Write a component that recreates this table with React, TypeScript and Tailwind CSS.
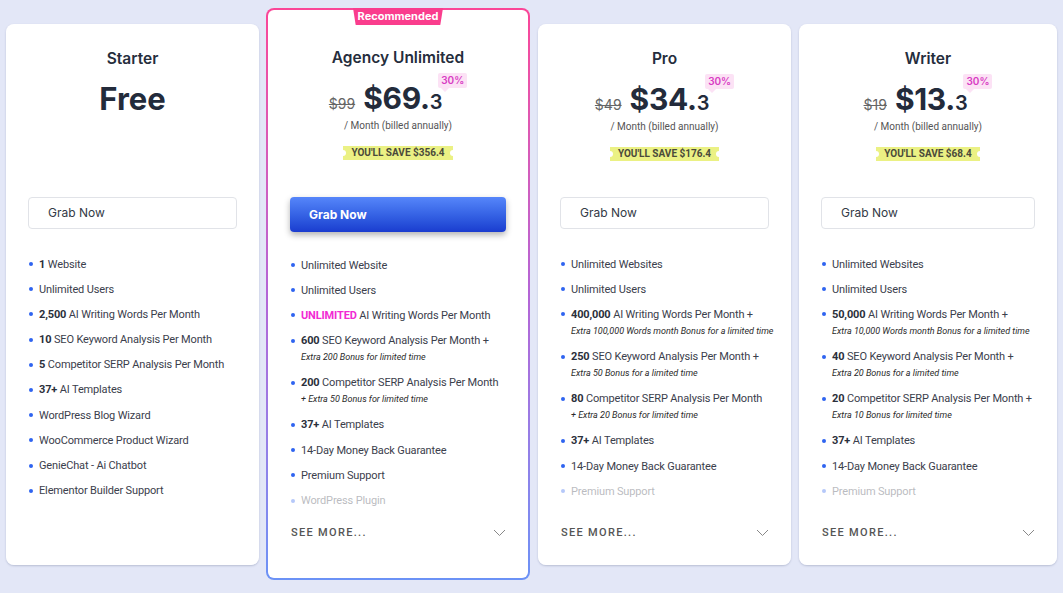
import React from 'react';

type Feature = {
  bold?: string;
  pink?: string;
  text: string;
  sub?: string;
  faded?: boolean;
};

type Plan = {
  name: string;
  width: string;
  gap: string;
  featured?: boolean;
  free?: boolean;
  old?: string;
  price?: string;
  cents?: string;
  save?: string;
  features: Feature[];
  seeMore?: boolean;
};

const plans: Plan[] = [
  {
    name: 'Starter',
    width: 'w-[253px]',
    gap: 'ml-[6px]',
    free: true,
    features: [
      { bold: '1', text: 'Website' },
      { text: 'Unlimited Users' },
      { bold: '2,500', text: 'AI Writing Words Per Month' },
      { bold: '10', text: 'SEO Keyword Analysis Per Month' },
      { bold: '5', text: 'Competitor SERP Analysis Per Month' },
      { bold: '37+', text: 'AI Templates' },
      { text: 'WordPress Blog Wizard' },
      { text: 'WooCommerce Product Wizard' },
      { text: 'GenieChat - Ai Chatbot' },
      { text: 'Elementor Builder Support' },
    ],
  },
  {
    name: 'Agency Unlimited',
    width: 'w-[264px]',
    gap: 'ml-[7px]',
    featured: true,
    old: '$99',
    price: '$69.',
    cents: '3',
    save: "YOU'LL SAVE $356.4",
    seeMore: true,
    features: [
      { text: 'Unlimited Website' },
      { text: 'Unlimited Users' },
      { pink: 'UNLIMITED', text: 'AI Writing Words Per Month' },
      { bold: '600', text: 'SEO Keyword Analysis Per Month +', sub: 'Extra 200 Bonus for limited time' },
      { bold: '200', text: 'Competitor SERP Analysis Per Month', sub: '+ Extra 50 Bonus for limited time' },
      { bold: '37+', text: 'AI Templates' },
      { text: '14-Day Money Back Guarantee' },
      { text: 'Premium Support' },
      { text: 'WordPress Plugin', faded: true },
    ],
  },
  {
    name: 'Pro',
    width: 'w-[253px]',
    gap: 'ml-[8px]',
    old: '$49',
    price: '$34.',
    cents: '3',
    save: "YOU'LL SAVE $176.4",
    seeMore: true,
    features: [
      { text: 'Unlimited Websites' },
      { text: 'Unlimited Users' },
      { bold: '400,000', text: 'AI Writing Words Per Month +', sub: 'Extra 100,000 Words month Bonus for a limited time' },
      { bold: '250', text: 'SEO Keyword Analysis Per Month +', sub: 'Extra 50 Bonus for a limited time' },
      { bold: '80', text: 'Competitor SERP Analysis Per Month', sub: '+ Extra 20 Bonus for limited time' },
      { bold: '37+', text: 'AI Templates' },
      { text: '14-Day Money Back Guarantee' },
      { text: 'Premium Support', faded: true },
    ],
  },
  {
    name: 'Writer',
    width: 'w-[258px]',
    gap: 'ml-[8px]',
    old: '$19',
    price: '$13.',
    cents: '3',
    save: "YOU'LL SAVE $68.4",
    seeMore: true,
    features: [
      { text: 'Unlimited Websites' },
      { text: 'Unlimited Users' },
      { bold: '50,000', text: 'AI Writing Words Per Month +', sub: 'Extra 10,000 Words month Bonus for a limited time' },
      { bold: '40', text: 'SEO Keyword Analysis Per Month +', sub: 'Extra 20 Bonus for a limited time' },
      { bold: '20', text: 'Competitor SERP Analysis Per Month +', sub: 'Extra 10 Bonus for limited time' },
      { bold: '37+', text: 'AI Templates' },
      { text: '14-Day Money Back Guarantee' },
      { text: 'Premium Support', faded: true },
    ],
  },
];

const SaveBadge: React.FC<{ label: string }> = ({ label }) => (
  <div className="relative h-[14px] bg-[#ebf184] px-[8px] flex items-center text-[10px] font-bold text-[#4a4a3a] leading-none">
    {label}
    <span className="absolute left-[-3px] top-[4px] w-[6px] h-[6px] rounded-full bg-white" />
    <span className="absolute right-[-3px] top-[4px] w-[6px] h-[6px] rounded-full bg-white" />
  </div>
);

const PlanCard: React.FC<{ plan: Plan }> = ({ plan }) => {
  const f = plan.featured;
  const body = (
    <div
      className={`flex flex-col h-full bg-white px-[22px] ${
        f ? 'rounded-[6px] pb-[37px]' : 'rounded-lg pb-[24px]'
      }`}
    >
      <div className={`flex flex-col items-center shrink-0 ${f ? 'h-[187px] pt-[37px]' : 'h-[173px] pt-[24px]'}`}>
        <h2 className="text-[15.5px] leading-[22px] font-semibold text-[#252d3c] font-['Inter',sans-serif]">
          {plan.name}
        </h2>
        {plan.free ? (
          <div className="mt-[11px] text-[31px] leading-[36px] font-bold text-[#232b3b] font-['Inter',sans-serif]">
            Free
          </div>
        ) : (
          <>
            <div className="mt-[11px] flex items-baseline h-[36px] font-['Inter',sans-serif]">
              <span className="text-[14px] text-[#666] line-through decoration-[1px] mr-[8px]">{plan.old}</span>
              <span className="text-[30px] leading-[36px] font-bold text-[#232b3b] tracking-[-0.3px]">
                {plan.price}
                <span className="text-[20px] font-semibold">{plan.cents}</span>
              </span>
              <span className="relative self-start -mt-[7px] -ml-[4px] h-[15px] px-[3px] rounded-[2px] bg-[#fce2f5] text-[10px] leading-[15px] font-semibold text-[#d83cc3]">
                30%
                <span className="absolute left-[3px] bottom-[-4px] w-0 h-0 border-l-[4px] border-l-transparent border-r-[4px] border-r-transparent border-t-[4px] border-t-[#fce2f5]" />
              </span>
            </div>
            <div className="mt-[3px] text-[10px] leading-[14px] text-[#555] font-['Roboto',sans-serif]">
              / Month (billed annually)
            </div>
            <div className="mt-[13px] font-['Roboto',sans-serif]">
              <SaveBadge label={plan.save || ''} />
            </div>
          </>
        )}
      </div>

      {f ? (
        <button className="shrink-0 h-[35px] w-full rounded-[4px] bg-gradient-to-b from-[#5686fa] to-[#1b3ccf] text-left pl-[19px] text-[12px] font-bold text-white shadow-[0_3px_6px_rgba(0,0,0,0.3)] font-['Inter',sans-serif]">
          Grab Now
        </button>
      ) : (
        <button className="shrink-0 h-[32px] w-full rounded-[4px] border border-[#e1e3e8] bg-white text-left pl-[19px] text-[12px] text-[#333a46] font-['Inter',sans-serif]">
          Grab Now
        </button>
      )}

      <ul className={`shrink-0 flex flex-col gap-[8.2px] font-['Roboto',sans-serif] ${f ? 'mt-[24.5px]' : 'mt-[27px]'}`}>
        {plan.features.map((it, i) => (
          <li key={i} className={`flex ${it.faded ? 'opacity-35' : ''}`}>
            <span className="w-[4px] h-[4px] rounded-full bg-[#2f64f0] mt-[6.5px] ml-[1px] mr-[6px] shrink-0" />
            <div className="whitespace-nowrap">
              <div className="text-[11px] leading-[17px] text-[#3b404c] tracking-[-0.15px]">
                {it.bold && <span className="font-bold text-[#2b303b]">{it.bold} </span>}
                {it.pink && <span className="font-bold text-[#f22ad3]">{it.pink} </span>}
                {it.text}
              </div>
              {it.sub && (
                <div className="text-[9px] leading-[17px] italic text-[#2a2a2a]">{it.sub}</div>
              )}
            </div>
          </li>
        ))}
      </ul>

      {plan.seeMore && (
        <div className="mt-auto shrink-0 flex items-center justify-between pl-[1px]">
          <span className="text-[11px] leading-[16px] font-medium tracking-[0.12em] text-[#555] font-['Roboto',sans-serif]">
            SEE MORE...
          </span>
          <svg width="13" height="8" viewBox="0 0 13 8" fill="none" stroke="#888" strokeWidth="1">
            <path d="M1 1l5.5 5.5L12 1" />
          </svg>
        </div>
      )}
    </div>
  );

  if (f) {
    return (
      <div className={`relative shrink-0 ${plan.gap} ${plan.width} h-[572px] rounded-lg p-[2px] bg-gradient-to-b from-[#fb4597] via-[#b465d6] to-[#6b92f6]`}>
        {body}
        <div className="absolute top-0 left-1/2 -translate-x-1/2 w-[90px] h-[17px] bg-[#fa3d8d] rounded-b-[3px] [clip-path:polygon(0_0,100%_0,97%_100%,3%_100%)] flex items-center justify-center text-[11px] font-bold text-white font-['Inter',sans-serif]">
          Recommended
        </div>
      </div>
    );
  }
  return (
    <div className={`shrink-0 ${plan.gap} ${plan.width} h-[541px] rounded-lg shadow-[0_1px_2px_rgba(60,70,110,0.25)]`}>{body}</div>
  );
};

export default function App() {
  return (
    <div className="w-[1063px] h-[593px] bg-[#e3e7f7] overflow-hidden">
      <div className="flex items-center pt-[8px]">
        {plans.map((p) => (
          <PlanCard key={p.name} plan={p} />
        ))}
      </div>
    </div>
  );
}
